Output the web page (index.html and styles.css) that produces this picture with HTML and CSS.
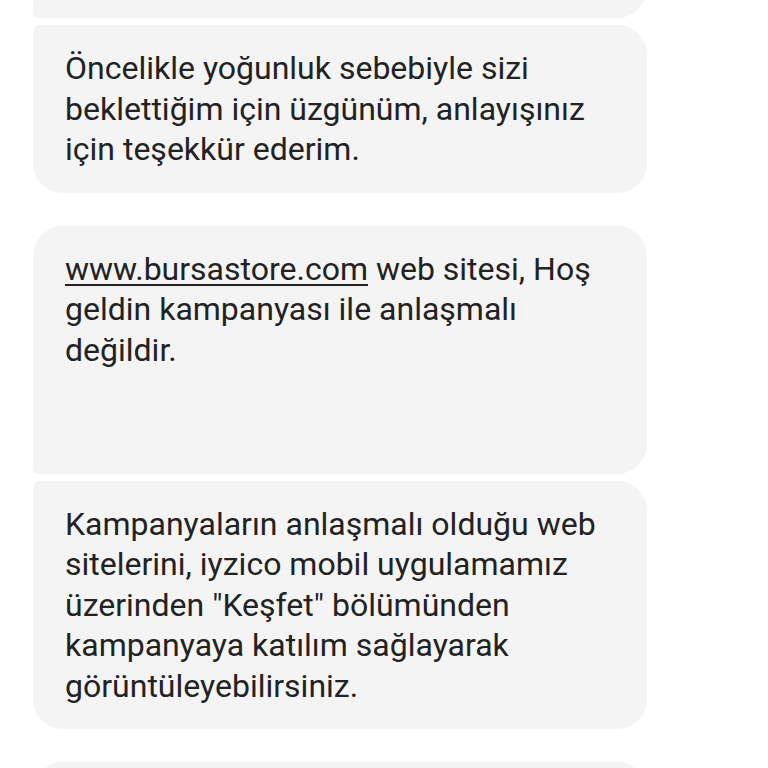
FILE: index.html
```html
<!DOCTYPE html>
<html lang="tr">
<head>
<meta charset="utf-8">
<link rel="stylesheet" href="styles.css">
</head>
<body>
<div class="chat">
  <div class="thread">
    <div class="group">
      <div class="bubble first-prev"></div>
      <div class="bubble last">Öncelikle yoğunluk sebebiyle sizi beklettiğim için üzgünüm, anlayışınız için teşekkür ederim.</div>
    </div>
    <div class="group">
      <div class="bubble first tall"><span class="link">www.bursastore.com</span> web sitesi, Hoş geldin kampanyası ile anlaşmalı değildir.</div>
      <div class="bubble last">Kampanyaların anlaşmalı olduğu web sitelerini, iyzico mobil uygulamamız üzerinden "Keşfet" bölümünden kampanyaya katılım sağlayarak görüntüleyebilirsiniz.</div>
    </div>
    <div class="group">
      <div class="bubble first next"></div>
    </div>
  </div>
</div>
</body>
</html>
```
FILE: styles.css
```css
html, body {
  margin: 0;
  padding: 0;
  background: #ffffff;
}
.chat {
  width: 768px;
  height: 768px;
  overflow: hidden;
}
.thread {
  display: flex;
  flex-direction: column;
  gap: 33px;
  margin-top: -42px;
}
.group {
  display: flex;
  flex-direction: column;
  gap: 7px;
}
.bubble {
  width: 614px;
  margin-left: 33px;
  box-sizing: border-box;
  padding: 23px 32px;
  background: #f4f4f4;
  border-radius: 30px;
  font-family: Roboto, "Noto Sans", sans-serif;
  font-size: 32px;
  line-height: 40.5px;
  color: #222222;
}
.bubble.first {
  border-bottom-left-radius: 6px;
}
.bubble.last {
  border-top-left-radius: 6px;
}
.bubble.first-prev {
  height: 60px;
  border-bottom-left-radius: 6px;
}
.bubble.tall {
  min-height: 248px;
}
.bubble.next {
  height: 100px;
}
.link {
  text-decoration: underline;
  text-underline-offset: 4px;
  text-decoration-thickness: 2px;
}
```
